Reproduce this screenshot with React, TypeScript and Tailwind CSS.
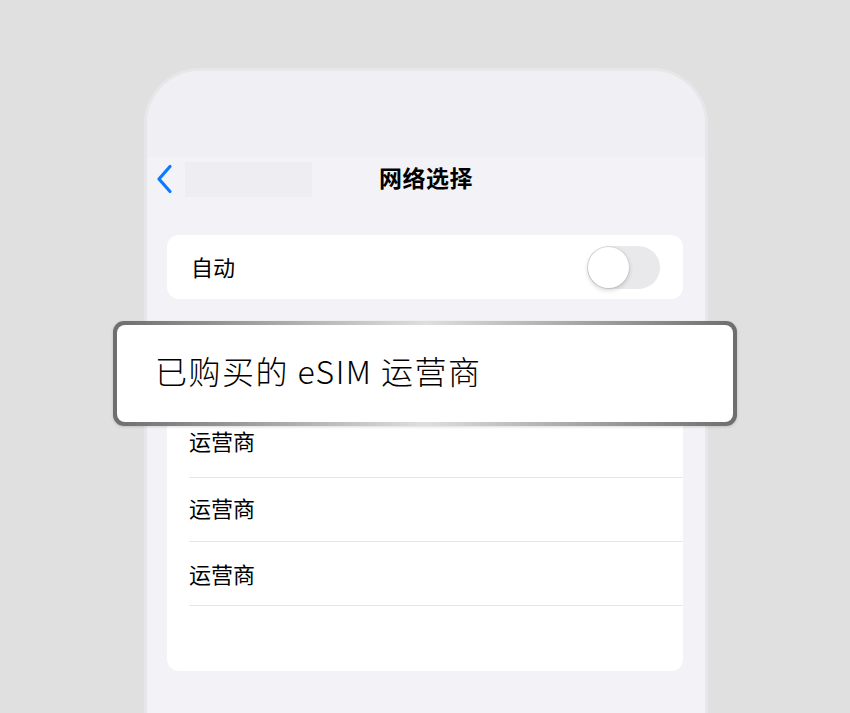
import React from 'react';

const carriers = ['运营商', '运营商', '运营商'];

const cjk = "font-['Noto_Sans_CJK_SC','Noto_Sans',sans-serif]";

function Toggle() {
  return (
    <div className="flex h-[43px] w-[73px] items-center rounded-full bg-[#e9e9eb] px-[1px]">
      <div className="h-[41px] w-[41px] rounded-full bg-white shadow-[0_2px_5px_rgba(0,0,0,0.18),0_0_0_1px_rgba(0,0,0,0.05)]" />
    </div>
  );
}

export default function App() {
  return (
    <div className={`relative h-[713px] w-[850px] overflow-hidden bg-[#e0e0e0] pl-[144px] pt-[68px] text-black ${cjk}`}>
      {/* phone frame */}
      <div className="h-[700px] w-[564px] overflow-hidden rounded-t-[56px] border-[3px] border-b-0 border-[#e7e7e9] bg-[#f2f2f7]">
        <div className="h-[86px] bg-[#efeff4]" />

        {/* nav bar */}
        <div className="grid h-[44px] grid-cols-[1fr_auto_1fr] items-center">
          <div className="flex items-center">
            <svg width="20" height="30" viewBox="0 0 20 30" className="ml-[8px]">
              <polyline
                points="15,2.5 4,15 15,27.5"
                fill="none"
                stroke="#0a7aff"
                strokeWidth="3.2"
                strokeLinecap="round"
                strokeLinejoin="round"
              />
            </svg>
            <div className="ml-[10px] h-[35px] w-[127px] bg-[#ededf2]" />
          </div>
          <div className="pb-[3px] text-[23px] font-bold leading-none tracking-[0.5px]">网络选择</div>
          <div />
        </div>

        {/* auto toggle */}
        <div className="mx-[20px] mt-[34px] flex h-[64px] w-[516px] items-center justify-between rounded-[12px] bg-white pl-[24px] pr-[23px]">
          <span className="pb-[2px] text-[22px] leading-none">自动</span>
          <Toggle />
        </div>

        {/* carriers */}
        <div className="mx-[20px] mt-[36px] flex h-[336px] w-[516px] flex-col rounded-[12px] bg-white">
          <div className="h-[79px]" />
          {carriers.map((c, i) => (
            <div
              key={i}
              className={`ml-[22px] flex h-[64px] items-center border-b border-[#e6e6ea] ${i === 0 ? 'pb-[12px]' : i === 1 ? 'pb-[6px]' : 'pb-[2px]'}`}
            >
              <span className="text-[22px] leading-none">{c}</span>
            </div>
          ))}
        </div>
      </div>

      {/* highlighted section header */}
      <div className="absolute left-[113px] top-[321px] h-[105px] w-[624px] rounded-[11px] bg-[linear-gradient(to_right,#6e6e6e_0%,#9a9a9a_20%,#dedede_50%,#9a9a9a_80%,#6e6e6e_100%)] p-[4px] shadow-[0_1px_3px_rgba(0,0,0,0.15)]">
        <div className="flex h-full w-full items-center rounded-[8px] bg-white pl-[38px]">
          <span className="pb-[8px] text-[32px] font-light leading-none tracking-[1.5px]">已购买的 eSIM 运营商</span>
        </div>
      </div>
    </div>
  );
}
